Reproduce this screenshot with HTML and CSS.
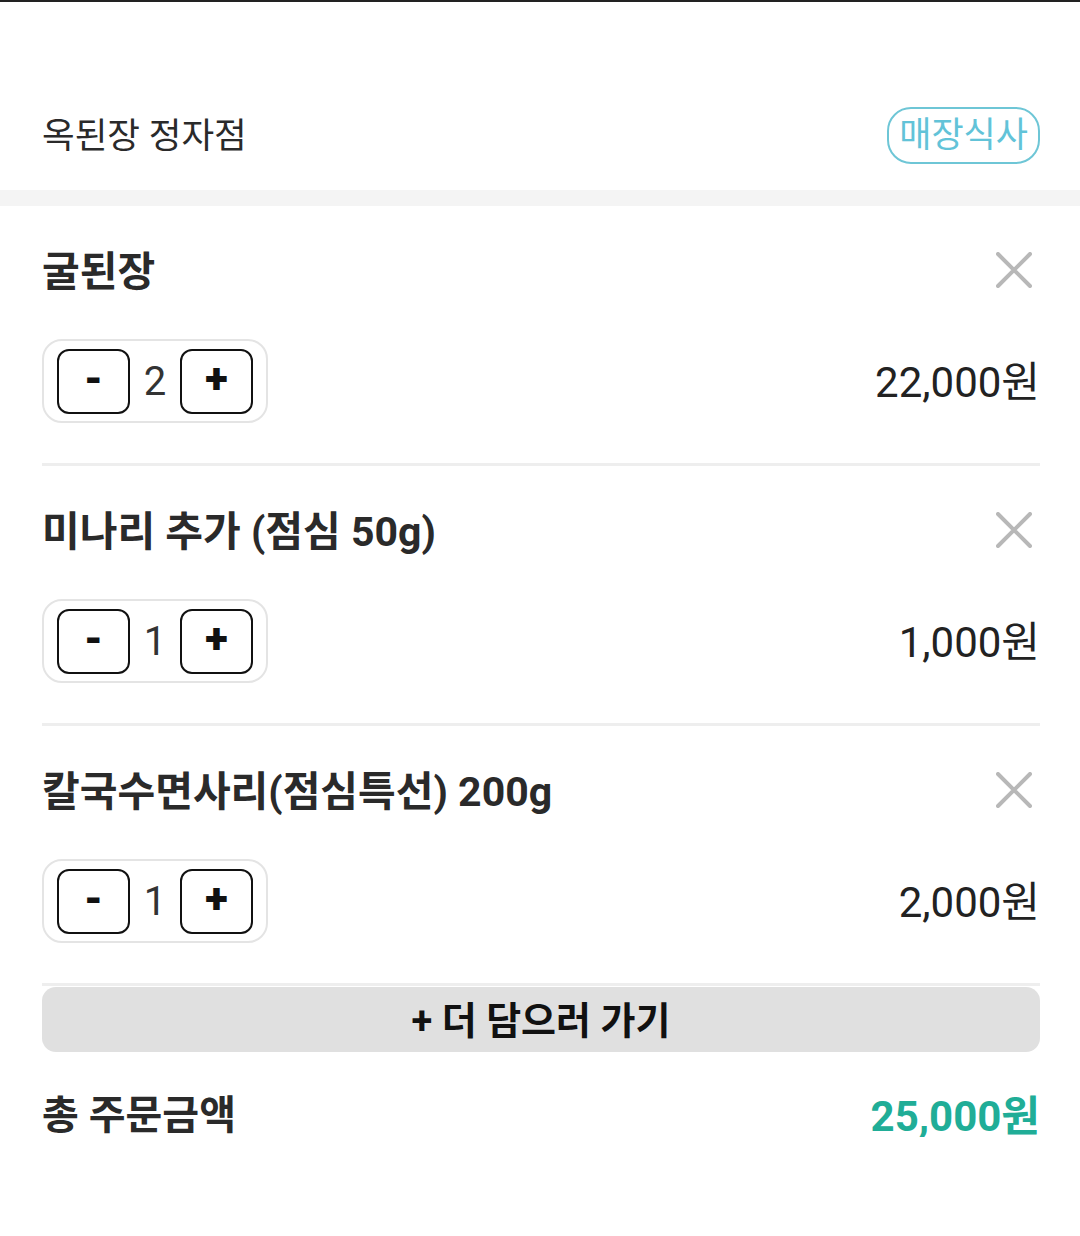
FILE: index.html
```html
<!DOCTYPE html>
<html lang="ko">
<head>
  <meta charset="UTF-8" />
  <meta name="viewport" content="width=device-width, initial-scale=1.0" />
  <title>장바구니</title>
  <link rel="stylesheet" href="styles.css">
</head>
<body>
  <!-- store header -->
  <div class="store-header">
    <div class="store-name">옥된장 정자점</div>
    <div class="badge">매장식사</div>
  </div>
  <div class="band"></div>

  <div class="cart">
    <div class="item">
      <div class="item-top">
        <div class="item-name">굴된장</div>
        <button class="remove" aria-label="삭제">
          <svg width="36" height="36" viewBox="0 0 36 36"><path d="M2 2L34 34M34 2L2 34" stroke="#b8b8b8" stroke-width="4" stroke-linecap="round"/></svg>
        </button>
      </div>
      <div class="item-bottom">
        <div class="qty">
          <button class="qty-btn">-</button>
          <span class="qty-num">2</span>
          <button class="qty-btn">+</button>
        </div>
        <div class="price">22,000원</div>
      </div>
    </div>

    <div class="item">
      <div class="item-top">
        <div class="item-name">미나리 추가 (점심 50g)</div>
        <button class="remove" aria-label="삭제">
          <svg width="36" height="36" viewBox="0 0 36 36"><path d="M2 2L34 34M34 2L2 34" stroke="#b8b8b8" stroke-width="4" stroke-linecap="round"/></svg>
        </button>
      </div>
      <div class="item-bottom">
        <div class="qty">
          <button class="qty-btn">-</button>
          <span class="qty-num">1</span>
          <button class="qty-btn">+</button>
        </div>
        <div class="price">1,000원</div>
      </div>
    </div>

    <div class="item">
      <div class="item-top">
        <div class="item-name">칼국수면사리(점심특선) 200g</div>
        <button class="remove" aria-label="삭제">
          <svg width="36" height="36" viewBox="0 0 36 36"><path d="M2 2L34 34M34 2L2 34" stroke="#b8b8b8" stroke-width="4" stroke-linecap="round"/></svg>
        </button>
      </div>
      <div class="item-bottom">
        <div class="qty">
          <button class="qty-btn">-</button>
          <span class="qty-num">1</span>
          <button class="qty-btn">+</button>
        </div>
        <div class="price">2,000원</div>
      </div>
    </div>

    <button class="more">+ 더 담으러 가기</button>

    <div class="total">
      <div class="total-label">총 주문금액</div>
      <div class="total-price">25,000원</div>
    </div>
  </div>
</body>
</html>
```

FILE: styles.css
```css
body {
  margin: 0;
  border-top: 2px solid #222;
  background: #fff;
  color: #222;
  font-family: Roboto, "Noto Sans CJK KR", sans-serif;
}
button {
  font-family: inherit;
  cursor: pointer;
}
.store-header {
  height: 188px;
  box-sizing: border-box;
  padding: 0 40px 26px 42px;
  display: flex;
  align-items: flex-end;
  justify-content: space-between;
}
.store-name {
  font-size: 35.5px;
  line-height: 56px;
  color: #2a2a2a;
}
.badge {
  height: 57px;
  box-sizing: border-box;
  padding: 2px 10px 0;
  border: 2px solid #6ec6d6;
  border-radius: 24px;
  color: #62c3d8;
  font-size: 35px;
  line-height: 50px;
}
.band {
  height: 16px;
  background: #f4f4f4;
}
.cart {
  padding: 0 40px 0 42px;
}
.item {
  padding: 37px 0 40px;
  border-bottom: 3px solid #eeeeee;
}
.item-top {
  display: flex;
  align-items: center;
  justify-content: space-between;
  height: 50px;
}
.item-name {
  font-size: 41px;
  font-weight: bold;
  color: #2a2a2a;
}
.remove {
  border: none;
  background: none;
  padding: 0;
  margin: 4px 8px 0 0;
  display: flex;
}
.item-bottom {
  margin-top: 46px;
  display: flex;
  align-items: center;
  justify-content: space-between;
}
.qty {
  width: 226px;
  height: 84px;
  box-sizing: border-box;
  border: 2px solid #e4e4e4;
  border-radius: 20px;
  padding: 0 13px;
  display: flex;
  align-items: center;
  justify-content: space-between;
}
.qty-btn {
  width: 73px;
  height: 65px;
  box-sizing: border-box;
  border: 2px solid #111;
  border-radius: 12px;
  background: #fff;
  color: #111;
  font-size: 42px;
  font-weight: 900;
  line-height: 1;
  padding: 0 0 4px;
}
.qty-num {
  font-size: 40px;
  color: #333;
}
.price {
  font-size: 42px;
  color: #222;
  margin-top: -6px;
}
.more {
  display: block;
  width: 100%;
  height: 65px;
  margin-top: 1px;
  border: none;
  border-radius: 14px;
  background: #e0e0e0;
  color: #111;
  font-size: 38px;
  font-weight: bold;
  padding: 0 0 4px;
}
.total {
  margin-top: 35px;
  height: 50px;
  display: flex;
  align-items: center;
  justify-content: space-between;
}
.total-label {
  font-size: 40px;
  font-weight: bold;
  color: #2a2a2a;
}
.total-price {
  font-size: 42px;
  font-weight: bold;
  color: #20ad97;
}
```
